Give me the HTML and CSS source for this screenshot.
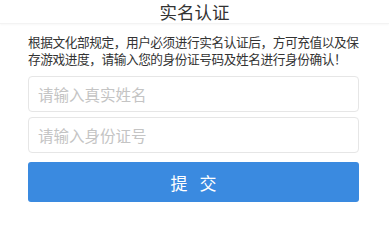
FILE: index.html
```html
<!DOCTYPE html>
<html lang="zh-CN">
<head>
<meta charset="utf-8">
<title>实名认证</title>
<link rel="stylesheet" href="styles.css">
</head>
<body>
<div class="page">
  <header class="header">实名认证</header>
  <main class="content">
    <p class="notice">根据文化部规定，用户必须进行实名认证后，方可充值以及保存游戏进度，请输入您的身份证号码及姓名进行身份确认！</p>
    <form class="form">
      <input class="field" type="text" placeholder="请输入真实姓名">
      <input class="field" type="text" placeholder="请输入身份证号">
      <button class="submit" type="button">提 交</button>
    </form>
  </main>
</div>
</body>
</html>
```
FILE: styles.css
```css
* { box-sizing: border-box; }
html, body {
  margin: 0;
  padding: 0;
  background: #fff;
}
body {
  font-family: "Noto Sans CJK SC", "Noto Sans", sans-serif;
  color: #333;
}
.page {
  width: 389px;
  height: 212px;
  overflow: hidden;
}
.header {
  height: 24px;
  padding-top: 1px;
  line-height: 22px;
  text-align: center;
  font-size: 17.5px;
  color: #333;
  border-bottom: 1px solid #f3f3f3;
  box-shadow: 0 1px 2px rgba(0,0,0,0.03);
}
.content {
  padding: 10px 28px 0 28px;
}
.notice {
  margin: 0;
  font-size: 12.7px;
  letter-spacing: -0.45px;
  line-height: 16.5px;
  color: #333;
}
.form {
  margin-top: 9px;
  margin-right: 2px;
  display: flex;
  flex-direction: column;
  gap: 5px;
}
.field {
  display: block;
  width: 100%;
  height: 36px;
  margin: 0;
  padding: 0 9px;
  border: 1px solid #e6e6e6;
  border-radius: 4px;
  font-family: inherit;
  font-size: 15.5px;
  color: #333;
  background: #fff;
  outline: none;
}
.field::placeholder {
  color: #c4c4c4;
}
.submit {
  margin-top: 4px;
  height: 40px;
  border: 0;
  border-radius: 3px;
  background: #3a8ae0;
  color: #fff;
  font-family: inherit;
  font-size: 17px;
  letter-spacing: 4px;
  padding: 0 0 0 4px;
}
```
